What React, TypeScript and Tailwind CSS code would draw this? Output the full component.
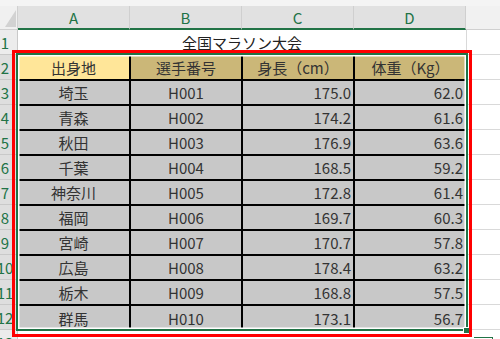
import React from "react";

const data: [string, string, string, string][] = [
  ["埼玉", "H001", "175.0", "62.0"],
  ["青森", "H002", "174.2", "61.6"],
  ["秋田", "H003", "176.9", "63.6"],
  ["千葉", "H004", "168.5", "59.2"],
  ["神奈川", "H005", "172.8", "61.4"],
  ["福岡", "H006", "169.7", "60.3"],
  ["宮崎", "H007", "170.7", "57.8"],
  ["広島", "H008", "178.4", "63.2"],
  ["栃木", "H009", "168.8", "57.5"],
  ["群馬", "H010", "173.1", "56.7"],
];

const rowNums = ["2", "3", "4", "5", "6", "7", "8", "9", "10", "11", "12"];

function RowHead({ n, first }: { n: string; first?: boolean }) {
  return (
    <div
      className={
        "h-[25px] w-[18px] overflow-hidden border-b border-r border-[#c9c9c9] flex items-center " +
        (first ? "bg-[#ececec]" : "bg-[#dedede]")
      }
    >
      <div className="w-[10px] flex justify-center text-[#217346] leading-none">
        <span>{n}</span>
      </div>
    </div>
  );
}

export default function App() {
  return (
    <div className="relative w-[500px] h-[339px] overflow-hidden bg-white font-['Noto_Sans_CJK_JP','Noto_Sans',sans-serif] text-[15px] text-[#333]">
      {/* top strip */}
      <div className="h-[6px] bg-[#f4f4f4]" />
      {/* column headers */}
      <div className="flex h-[24px]">
        <div className="w-[18px] bg-[#f0f0f0] border-b border-r border-[#d0d0d0] relative">
          <svg width="18" height="24" className="block">
            <polygon points="16,4 16,21 5,21" fill="#d2d2d2" />
          </svg>
        </div>
        {["A", "B", "C", "D"].map((c) => (
          <div
            key={c}
            className="w-[112px] bg-[#e1e1e1] border-b-2 border-b-[#217346] border-r border-r-[#cfcfcf] flex items-center justify-center text-[#217346] text-[15px] leading-none"
          >
            {c}
          </div>
        ))}
        <div className="flex-1 bg-[#f1f1f1] border-b border-[#d0d0d0]" />
      </div>
      {/* row 1 */}
      <div className="flex h-[25px]">
        <RowHead n="1" first />
        <div className="w-[448px] border-b border-[#d9d9d9] flex items-center justify-center text-[#222] leading-none">
          全国マラソン大会
        </div>
        <div className="flex-1 border-b border-l border-[#d9d9d9]" />
      </div>
      {/* rows 2-12 */}
      <div className="flex">
        <div className="flex flex-col">
          {rowNums.map((n) => (
            <RowHead key={n} n={n} />
          ))}
        </div>
        <div className="w-[448px] h-[275px] grid grid-cols-[111px_110px_110px_111px] grid-rows-[24px_repeat(9,23px)_24px] gap-[2px] bg-black leading-none">
          <div className="bg-[#ffe699] flex items-center justify-center">出身地</div>
          <div className="bg-[#cbb778] flex items-center justify-center">選手番号</div>
          <div className="bg-[#cbb778] flex items-center justify-center">身長（cm）</div>
          <div className="bg-[#cbb778] flex items-center justify-center">体重（Kg）</div>
          {data.map((r) => (
            <React.Fragment key={r[1]}>
              <div className="bg-[#c8c8c8] flex items-center justify-center">{r[0]}</div>
              <div className="bg-[#c8c8c8] flex items-center justify-center">{r[1]}</div>
              <div className="bg-[#c8c8c8] flex items-center justify-end pr-[2px]">{r[2]}</div>
              <div className="bg-[#c8c8c8] flex items-center justify-end pr-[3px]">{r[3]}</div>
            </React.Fragment>
          ))}
        </div>
        <div className="flex-1 flex flex-col">
          {rowNums.map((n) => (
            <div key={n} className="h-[25px] border-b border-[#d9d9d9]" />
          ))}
        </div>
      </div>
      {/* row 13 */}
      <div className="flex h-[25px]">
        <RowHead n="13" first />
        <div className="flex-1" />
      </div>

      {/* selection border */}
      <div className="absolute left-[16px] top-[53px] w-[452px] h-[278px] border-2 border-[#217346] shadow-[inset_0_0_0_1.5px_#ffffff]" />
      {/* fill handle */}
      <div className="absolute left-[463px] top-[327px] w-[7px] h-[7px] bg-[#217346] border border-white" />
      {/* red annotation box */}
      <div className="absolute left-[12px] top-[50px] w-[460px] h-[287px] border-[3px] border-[#ff0000]" />
      {/* stray selection corner bottom right */}
      <div className="absolute left-[474px] top-[337px] w-[19px] h-px bg-[#217346]" />
      <div className="absolute left-[492px] top-[337px] w-px h-[2px] bg-[#217346]" />
    </div>
  );
}
